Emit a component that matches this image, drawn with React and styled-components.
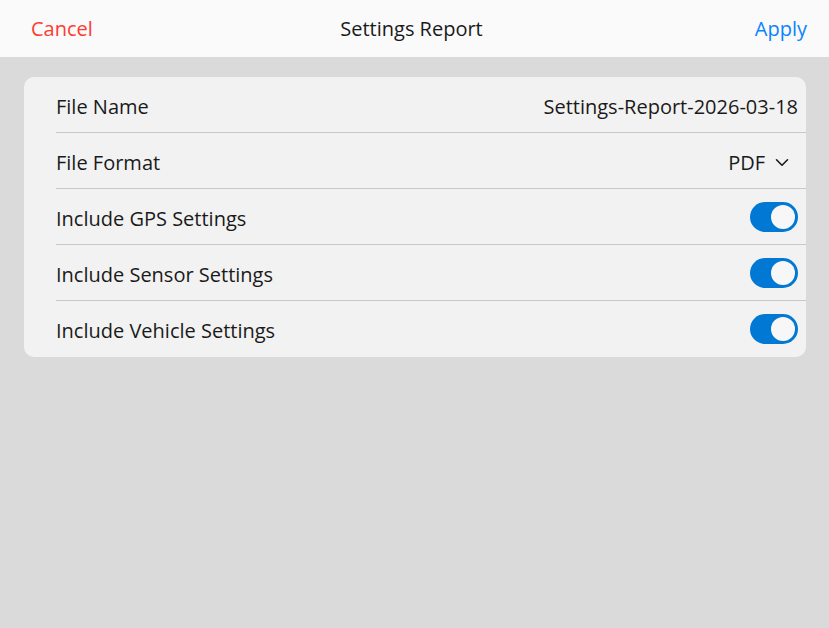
import React, { useState } from "react";
import styled, { createGlobalStyle } from "styled-components";

const GlobalStyle = createGlobalStyle`
  html, body {
    margin: 0;
    padding: 0;
    background: #dadada;
    font-family: "Open Sans", "Noto Sans", sans-serif;
  }
  #root {
    min-height: 100vh;
  }
`;

const Page = styled.div`
  width: 100%;
  min-height: 100vh;
  background: #dadada;
`;

const Header = styled.header`
  height: 57px;
  display: grid;
  grid-template-columns: 1fr auto 1fr;
  align-items: center;
  padding: 0 22px 0 31px;
  background: #fafafa;
  font-size: 20px;
`;

const HeaderButton = styled.button`
  border: none;
  background: none;
  padding: 0;
  font: inherit;
  font-size: 20px;
  color: ${(p) => p.color};
  justify-self: ${(p) => (p.end ? "end" : "start")};
  cursor: pointer;
`;

const Title = styled.h1`
  margin: 0 0 0 -15px;
  font-size: 20px;
  font-weight: 400;
  color: #1a1a1a;
`;

const Card = styled.section`
  margin: 20px 23px 0 24px;
  background: #f2f2f2;
  border-radius: 10px;
  overflow: hidden;
`;

const Row = styled.div`
  height: 56px;
  margin-left: 32px;
  padding: 3px 8px 0 0;
  display: flex;
  align-items: center;
  justify-content: space-between;
  border-bottom: ${(p) => (p.last ? "none" : "1px solid #c8c8c8")};
  box-sizing: border-box;
  font-size: 20px;
  color: #1a1a1a;
`;

const Value = styled.span`
  display: flex;
  align-items: center;
  gap: 10px;
`;

const Chevron = styled.svg`
  width: 14px;
  height: 9px;
  margin: 0 9px 0 0;
`;

const Switch = styled.button`
  width: 48px;
  height: 30px;
  margin-top: -3px;
  border-radius: 15px;
  border: none;
  padding: 3px;
  background: ${(p) => (p.on ? "#0078d4" : "#b8b8b8")};
  display: flex;
  justify-content: ${(p) => (p.on ? "flex-end" : "flex-start")};
  cursor: pointer;
  box-sizing: border-box;
`;

const Knob = styled.span`
  width: 24px;
  height: 24px;
  border-radius: 50%;
  background: #f7f7f7;
`;

export default function App() {
  const [toggles, setToggles] = useState({ gps: true, sensor: true, vehicle: true });
  const flip = (k) => setToggles((t) => ({ ...t, [k]: !t[k] }));

  const rows = [
    { key: "gps", label: "Include GPS Settings" },
    { key: "sensor", label: "Include Sensor Settings" },
    { key: "vehicle", label: "Include Vehicle Settings" },
  ];

  return (
    <Page>
      <GlobalStyle />
      <Header>
        <HeaderButton color="#ff3b30">Cancel</HeaderButton>
        <Title>Settings Report</Title>
        <HeaderButton color="#0a84ff" end>
          Apply
        </HeaderButton>
      </Header>
      <Card>
        <Row>
          <span>File Name</span>
          <Value>Settings-Report-2026-03-18</Value>
        </Row>
        <Row>
          <span>File Format</span>
          <Value>
            PDF
            <Chevron viewBox="0 0 14 9">
              <path d="M1.5 1.8 L7 7.2 L12.5 1.8" fill="none" stroke="#1a1a1a" strokeWidth="1.6" strokeLinecap="round" strokeLinejoin="round" />
            </Chevron>
          </Value>
        </Row>
        {rows.map((r, i) => (
          <Row key={r.key} last={i === rows.length - 1}>
            <span>{r.label}</span>
            <Switch on={toggles[r.key]} onClick={() => flip(r.key)}>
              <Knob />
            </Switch>
          </Row>
        ))}
      </Card>
    </Page>
  );
}
